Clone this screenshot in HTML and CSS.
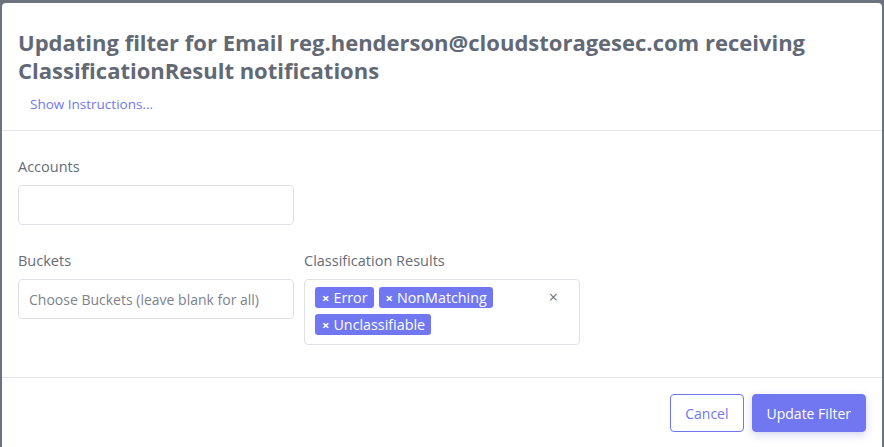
FILE: index.html
```html
<!DOCTYPE html>
<html>
<head>
<meta charset="utf-8">
<link rel="stylesheet" href="styles.css">
</head>
<body>
<div class="modal">
  <div class="modal-header">
    <h2 class="modal-title">Updating filter for Email reg.henderson@cloudstoragesec.com receiving ClassificationResult notifications</h2>
    <a class="link-btn" href="#">Show Instructions...</a>
  </div>
  <div class="modal-body">
    <div class="form-grid">
      <div class="field">
        <label class="label">Accounts</label>
        <div class="input"></div>
      </div>
      <div class="field"></div>
      <div class="field">
        <label class="label">Buckets</label>
        <div class="input"><span class="placeholder">Choose Buckets (leave blank for all)</span></div>
      </div>
      <div class="field">
        <label class="label">Classification Results</label>
        <div class="multi">
          <div class="tags">
            <span class="tag"><span class="tag-x">×</span>Error</span>
            <span class="tag"><span class="tag-x">×</span>NonMatching</span>
            <span class="tag"><span class="tag-x">×</span>Unclassifiable</span>
          </div>
          <span class="clear">×</span>
        </div>
      </div>
    </div>
  </div>
  <div class="modal-footer">
    <button class="btn btn-outline">Cancel</button>
    <button class="btn btn-primary">Update Filter</button>
  </div>
</div>
</body>
</html>
```

FILE: styles.css
```css
html, body {
  margin: 0;
  padding: 0;
}
body {
  background: #6c727e;
  height: 447px;
  overflow: hidden;
  font-family: "Open Sans", "Noto Sans", sans-serif;
}
.modal {
  margin: 3px 2px 0 2px;
  width: 880px;
  height: 460px;
  background: #fff;
  border-radius: 4px 4px 0 0;
}
.modal-header {
  padding: 25px 16px 16px 16px;
  border-bottom: 1px solid #e3e4ea;
}
.modal-title {
  margin: 0;
  font-size: 22px;
  line-height: 28px;
  font-weight: 700;
  color: #626975;
  width: 840px;
}
.link-btn {
  display: inline-block;
  margin-top: 10px;
  padding: 0 12px;
  font-size: 13.5px;
  line-height: 20px;
  color: #7177f0;
  text-decoration: none;
}
.modal-body {
  padding: 26px 16px 32px 16px;
  border-bottom: 1px solid #e3e4ea;
}
.form-grid {
  display: grid;
  grid-template-columns: 276px 276px;
  column-gap: 10px;
  row-gap: 26px;
}
.label {
  display: block;
  font-size: 14.5px;
  line-height: 20px;
  color: #666c78;
  margin-bottom: 8px;
}
.input {
  box-sizing: border-box;
  height: 40px;
  border: 1px solid #dee0e5;
  border-radius: 4px;
  padding: 0 10px;
  display: flex;
  align-items: center;
}
.placeholder {
  font-size: 14px;
  color: #7d828c;
}
.multi {
  box-sizing: border-box;
  height: 66px;
  border: 1px solid #dee0e5;
  border-radius: 4px;
  padding: 7px 10px 0 10px;
  display: flex;
  align-items: flex-start;
}
.tags {
  display: flex;
  flex-wrap: wrap;
  gap: 6px 5px;
  width: 200px;
}
.tag {
  display: inline-flex;
  align-items: center;
  height: 21px;
  padding: 0 6px 0 7px;
  background: #7177f0;
  color: #fff;
  border-radius: 3px;
  font-size: 14.3px;
  font-weight: 500;
}
.tag-x {
  font-size: 13px;
  font-weight: 700;
  margin-right: 4px;
}
.clear {
  margin-left: auto;
  margin-right: 11px;
  font-size: 16px;
  color: #6c727e;
  line-height: 20px;
}
.modal-footer {
  display: flex;
  justify-content: flex-end;
  gap: 8px;
  padding: 16px 16px;
}
.btn {
  box-sizing: border-box;
  height: 38px;
  padding: 0 14px;
  border-radius: 4px;
  font-family: inherit;
  font-size: 14px;
  cursor: pointer;
}
.btn-outline {
  background: #fff;
  border: 1px solid #7177f0;
  color: #7177f0;
  padding: 0 14px;
}
.btn-primary {
  background: #7177f0;
  border: 1px solid #7177f0;
  color: #fff;
  font-weight: 500;
  box-shadow: 0 3px 8px rgba(80, 90, 200, 0.25);
}
```
